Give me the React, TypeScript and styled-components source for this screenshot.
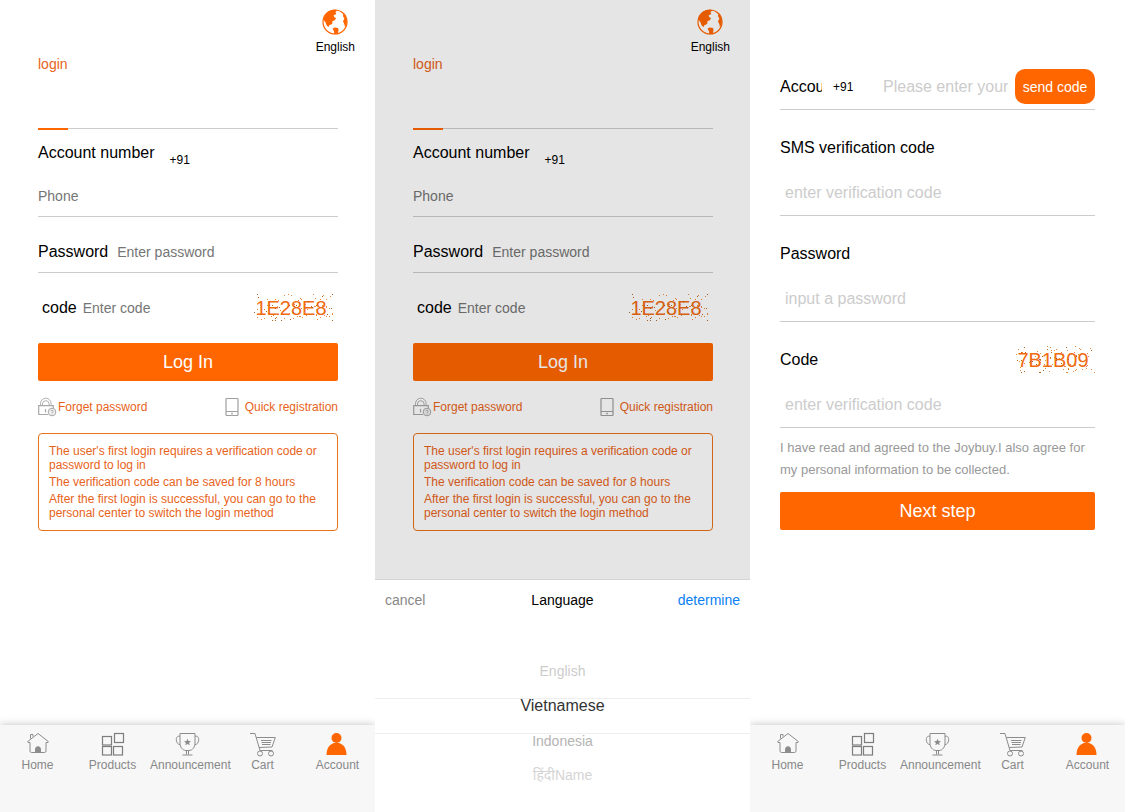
import React, { useId } from "react";
import styled, { createGlobalStyle, css } from "styled-components";

const ORANGE = "#ff6600";

const GlobalStyle = createGlobalStyle`
  *, *::before, *::after { box-sizing: border-box; }
  body {
    margin: 0;
    background: #fff;
    color: #000;
    font-family: "Liberation Sans", Arial, "Noto Sans", sans-serif;
    font-size: 14px;
  }
  button, input { font-family: inherit; }
  p, h2, ul { margin: 0; padding: 0; }
`;

const Page = styled.div`
  display: grid;
  grid-template-columns: repeat(3, minmax(0, 1fr));
  min-height: 100vh;
`;

const Phone = styled.section`
  position: relative;
  display: flex;
  flex-direction: column;
  overflow: hidden;
`;

const PlainButton = styled.button`
  border: 0;
  padding: 0;
  background: none;
  color: inherit;
  cursor: pointer;
`;

/* Login form */

const LoginBody = styled.main`
  padding: 0 37px 0 38px;
`;

const TopBar = styled.header`
  display: flex;
  justify-content: flex-end;
  height: 56px;
  padding: 9px 20px 0 0;
`;

const LanguageButton = styled(PlainButton)`
  display: flex;
  flex-direction: column;
  align-items: center;
  gap: 4px;
  font-size: 12px;
  line-height: 16px;
`;

const Tabs = styled.div`
  display: flex;
  height: 73px;
  border-bottom: 1px solid #ccc;
`;

const Tab = styled(PlainButton)`
  display: flex;
  height: 74px;
  border-bottom: 2px solid ${ORANGE};
  color: #e8631a;
  font-size: 14px;
  line-height: 16px;
`;

const FieldLabel = styled.label`
  flex: none;
  font-size: 16px;
  line-height: 20px;
`;

const LoginField = styled.div<{ $underline?: boolean; $inset?: boolean }>`
  display: flex;
  align-items: center;
  height: 56px;
  padding: ${(p) => (p.$inset ? "15px 5px 0 4px" : "14px 0 0")};
  gap: ${(p) => (p.$inset ? "6px" : "9px")};
  border-bottom: 1px solid ${(p) => (p.$underline ? "#ccc" : "transparent")};
`;

const AccountRow = styled.div`
  display: flex;
  gap: 15px;
  height: 44px;
  padding-top: 14px;
`;

const DialCode = styled(PlainButton)<{ $low?: boolean }>`
  flex: none;
  align-self: flex-start;
  font-size: 12px;
  line-height: 20px;
  margin-top: ${(p) => (p.$low ? "7px" : "0")};
`;

const PhoneRow = styled.div`
  display: flex;
  align-items: center;
  height: 44px;
  padding-top: 2px;
  border-bottom: 1px solid #ccc;
`;

const LoginInput = styled.input`
  flex: 1;
  width: 100%;
  min-width: 0;
  height: 24px;
  border: 0;
  padding: 0;
  outline: 0;
  background: transparent;
  font-size: 14px;
  &::placeholder { color: #757575; opacity: 1; }
`;

const CaptchaBox = styled.button`
  position: relative;
  flex: none;
  display: grid;
  place-items: center;
  width: 80px;
  height: 28px;
  border: 0;
  padding: 0 4px 0 0;
  background: none;
  color: #f06a12;
  font-size: 20px;
  line-height: 28px;
  cursor: pointer;
`;

const Noise = styled.svg`
  position: absolute;
  inset: 0;
`;

const MainButton = styled.button`
  display: block;
  width: 100%;
  height: 38px;
  border: 0;
  border-radius: 2px;
  padding: 0;
  background: ${ORANGE};
  color: #fff;
  font-size: 18px;
  line-height: 38px;
  cursor: pointer;
`;

const LoginAction = styled.div`
  padding-top: 14px;
`;

const HelpLinks = styled.div`
  display: flex;
  justify-content: space-between;
  align-items: center;
  height: 52px;
`;

const HelpLink = styled.a<{ $gap: number }>`
  display: flex;
  align-items: center;
  gap: ${(p) => p.$gap}px;
  color: #e8631a;
  font-size: 12px;
  text-decoration: none;
`;

const Notice = styled.div`
  display: flex;
  flex-direction: column;
  gap: 3px;
  padding: 10px;
  border: 1px solid #e8731a;
  border-radius: 4px;
  color: #e8631a;
  font-size: 12px;
  line-height: 14px;
`;

/* Tab bar */

const NavBar = styled.nav`
  display: grid;
  grid-template-columns: repeat(5, minmax(0, 1fr));
  height: 87px;
  margin-top: auto;
  padding-top: 6px;
  background: #f7f7f7;
  box-shadow: 0 0 8px rgba(0, 0, 0, 0.25);
`;

const NavItem = styled.a`
  display: flex;
  flex-direction: column;
  align-items: safe center;
  gap: 1px;
  height: 42px;
  color: #888;
  font-size: 12px;
  line-height: 14px;
  text-decoration: none;
  svg { height: 26px; }
`;

/* Language picker */

const Mask = styled.div`
  position: absolute;
  inset: 0;
  background: rgba(0, 0, 0, 0.1);
`;

const Sheet = styled.div`
  position: absolute;
  left: 0;
  right: 0;
  bottom: 0;
  height: 233px;
  border-top: 1px solid #d4d4d4;
  background: #fff;
`;

const SheetHeader = styled.div`
  display: grid;
  grid-template-columns: 1fr auto 1fr;
  align-items: center;
  height: 40px;
  padding: 0 10px;
`;

const SheetTitle = styled.h2`
  font-size: 14px;
  font-weight: 400;
`;

const SheetAction = styled(PlainButton)<{ $primary?: boolean }>`
  justify-self: ${(p) => (p.$primary ? "end" : "start")};
  color: ${(p) => (p.$primary ? "#0a7ff5" : "#888")};
  font-size: 14px;
`;

const Wheel = styled.ul`
  padding-top: 44px;
  list-style: none;
`;

const WheelRow = styled.li<{ $active?: boolean }>`
  display: flex;
  justify-content: center;
  align-items: flex-start;
  height: ${(p) => (p.$active ? "36px" : "34px")};
  ${(p) =>
    p.$active &&
    css`
      border: solid #eee;
      border-width: 1px 0;
    `}
`;

const WheelOption = styled(PlainButton)<{ $active?: boolean; $tone: string }>`
  color: ${(p) => p.$tone};
  font-size: ${(p) => (p.$active ? "16px" : "14px")};
  line-height: 14px;
`;

/* Registration form */

const RegisterBody = styled.main`
  padding: 64px 30px 0;
`;

const SendRow = styled.div`
  display: flex;
  align-items: center;
  height: 46px;
  border-bottom: 1px solid #ccc;
`;

const ClippedLabel = styled(FieldLabel)`
  width: 42px;
  margin-right: 11px;
  overflow: hidden;
  white-space: nowrap;
`;

const CodeSlot = styled.div`
  display: flex;
  flex: none;
  width: 50px;
`;

const RegisterInput = styled(LoginInput)`
  font-size: 16px;
  &::placeholder { color: #ccc; }
`;

const SendButton = styled.button`
  flex: none;
  width: 80px;
  height: 35px;
  margin-left: 7px;
  border: 0;
  border-radius: 10px;
  padding: 0;
  background: ${ORANGE};
  color: #fff;
  font-size: 14px;
  cursor: pointer;
`;

const StackedField = styled.div`
  display: flex;
  flex-direction: column;
  height: 106px;
  padding-top: 24px;
  border-bottom: 1px solid #ccc;
`;

const StackedHead = styled.div`
  display: flex;
  justify-content: space-between;
  align-items: center;
  height: 28px;
`;

const StackedInputSlot = styled.div`
  display: flex;
  flex: 1;
  align-items: center;
  padding: 9px 5px 0;
`;

const Terms = styled.p`
  padding: 9px 0 11px;
  color: #999;
  font-size: 13px;
  line-height: 22px;
`;

/* Icons */

const GlobeIcon = () => (
  <svg width="26" height="26" viewBox="0 0 26 26" aria-hidden="true">
    <circle cx="13" cy="13" r="12" fill="#fff" stroke={ORANGE} strokeWidth="1.2" />
    <path
      fill={ORANGE}
      d="M1.500 9C3 4 7.500 .8 13 .8l2.500.5-2 1.700.8 2-2.600 1.300.4 1.700 2 1.200-1.600 2.300-2 .6-.3 3-3 1.200-.2 1.800-2.200-1.300-1.600-4L1.500 11zM16 19l-3.500-.6-2 1.400 1.500 2.500.2 2.900 3.600-.3.700-3.800zM18 2.500l3.500 2.300-.6 2.200 1.500 2.500-1.400 3 1.300 2.500.7 3.500 1.700-4 .2-4L23 5z"
    />
  </svg>
);

const LockIcon = () => (
  <svg width="19" height="20" viewBox="0 0 19 20" fill="none" stroke="#a8a8a8" aria-hidden="true">
    <path d="M2.500 8.500V6.500a5.300 5.300 0 0 1 10.600 0V8.500M4.500 8.500V7a3.300 3.300 0 0 1 6.600 0v1.500" strokeWidth=".9" />
    <path d="M10 17.500H.7V8.700H15.300V11.500M7.500 12v3.500" strokeWidth="1.200" />
    <circle cx="14" cy="15" r="3.800" fill="#f2f2f2" />
    <path d="M12.800 14.300a1.200 1.200 0 1 1 1.200 1.300v.5M14 16.700v.7" strokeWidth=".9" />
  </svg>
);

const TabletIcon = () => (
  <svg width="14" height="20" viewBox="0 0 14 20" fill="none" stroke="#a0a0a0" aria-hidden="true">
    <rect x="1" y="1.500" width="12" height="17" rx=".5" strokeWidth="1.200" />
    <path d="M1 14.500h12" />
    <path d="M6.200 16.500h1.600" strokeWidth="1.400" />
  </svg>
);

const HomeIcon = () => (
  <svg width="24" height="26" viewBox="0 0 24 26" fill="none" stroke="#8c8c8c" strokeLinejoin="round" aria-hidden="true">
    <path d="M4.500 7.500V3.500h2.500V5.500M4 11.500H2L1.700 10.500 12 2.500 22.300 10.500 22 11.500H20V20q0 1.500-1.500 1.500h-13Q4 21.500 4 20z" />
    <path d="M9.500 21.500v-3.300a2.500 2.500 0 0 1 5 0v3.300z" fill="#8c8c8c" />
  </svg>
);

const ProductsIcon = () => (
  <svg width="24" height="26" viewBox="0 0 24 26" fill="none" stroke="#7d7d7d" strokeWidth="1.200" aria-hidden="true">
    <rect x="1.500" y="5.500" width="9" height="8.500" />
    <rect x="13.500" y="2.500" width="9" height="9" />
    <rect x="1.500" y="15.500" width="9" height="8.500" />
    <rect x="12.500" y="15.500" width="9" height="8.500" />
  </svg>
);

const TrophyIcon = () => (
  <svg width="75" height="26" viewBox="0 0 24 26" fill="none" stroke="#8c8c8c" aria-hidden="true">
    <path d="M4.500 2.500h15V12C19.500 16 17 19.500 13.500 19.500h-3C7 19.500 4.500 16 4.500 12zM4.500 5.500C2.500 4.500 .8 6 .8 8.500c0 3 1.500 4.800 3.900 5.300M19.500 5.500C21.500 4.500 23.200 6 23.200 8.500c0 3-1.500 4.800-3.900 5.300M11 19.500v4M13 19.500v4M7 24h10" />
    <path d="M12 7.800l1 2.300 2.400.2-1.800 1.600.6 2.400-2.200-1.300-2.200 1.300.6-2.400-1.800-1.600 2.400-.2z" fill="#8c8c8c" stroke="none" />
  </svg>
);

const CartIcon = () => (
  <svg width="26" height="26" viewBox="0 0 26 26" fill="none" stroke="#8c8c8c" strokeLinejoin="round" aria-hidden="true">
    <path d="M0 2.500H5L10 19.500H22.500M6.500 6.500H25.300L22 16 9 16.500M11 9.500h10.500M11.500 11.500h9.500M12 13.500h8.500" />
    <circle cx="10" cy="22.500" r="2.500" />
    <circle cx="21" cy="22.500" r="2.500" />
  </svg>
);

const PersonIcon = () => (
  <svg width="24" height="26" viewBox="0 0 24 26" fill={ORANGE} aria-hidden="true">
    <circle cx="10.500" cy="7" r="5" />
    <path d="M.5 24c0-6 2.500-10.500 7.500-12h5c5 1.500 7.500 6 7.500 12z" />
  </svg>
);

/* Speckles laid over the verification code, repeatable for each seed. */
const speckles = (seed: number) => {
  let s = seed;
  const next = (n: number) => {
    s = (s * 16807) % 2147483647;
    return s % n;
  };
  return Array.from({ length: 95 }, () => ({
    x: next(80),
    y: next(27),
    fill: next(3) === 0 ? "#b5651d" : "#ee8a3c",
  }));
};

const Captcha = ({ text, seed }: { text: string; seed: number }) => (
  <CaptchaBox type="button" title="Refresh code">
    {text}
    <Noise width="80" height="28" aria-hidden="true">
      {speckles(seed).map((d, i) => (
        <rect key={i} x={d.x} y={d.y} width="1" height="1" fill={d.fill} />
      ))}
    </Noise>
  </CaptchaBox>
);

const NAV = [
  { label: "Home", Icon: HomeIcon },
  { label: "Products", Icon: ProductsIcon },
  { label: "Announcement", Icon: TrophyIcon },
  { label: "Cart", Icon: CartIcon },
  { label: "Account", Icon: PersonIcon },
];

const BottomNav = () => (
  <NavBar>
    {NAV.map(({ label, Icon }) => (
      <NavItem href="#" key={label}>
        <Icon />
        {label}
      </NavItem>
    ))}
  </NavBar>
);

const LoginForm = () => {
  const id = useId();
  return (
    <>
      <TopBar>
        <LanguageButton type="button">
          <GlobeIcon />
          English
        </LanguageButton>
      </TopBar>
      <LoginBody>
        <Tabs>
          <Tab type="button">login</Tab>
        </Tabs>
        <AccountRow>
          <FieldLabel htmlFor={`${id}-phone`}>Account number</FieldLabel>
          <DialCode type="button" $low>+91</DialCode>
        </AccountRow>
        <PhoneRow>
          <LoginInput id={`${id}-phone`} type="tel" placeholder="Phone" />
        </PhoneRow>
        <LoginField $underline>
          <FieldLabel htmlFor={`${id}-pass`}>Password</FieldLabel>
          <LoginInput id={`${id}-pass`} type="password" placeholder="Enter password" />
        </LoginField>
        <LoginField $inset>
          <FieldLabel htmlFor={`${id}-code`}>code</FieldLabel>
          <LoginInput id={`${id}-code`} placeholder="Enter code" />
          <Captcha text="1E28E8" seed={4211} />
        </LoginField>
        <LoginAction>
          <MainButton type="button">Log In</MainButton>
        </LoginAction>
        <HelpLinks>
          <HelpLink href="#" $gap={1}>
            <LockIcon />
            Forget password
          </HelpLink>
          <HelpLink href="#" $gap={6}>
            <TabletIcon />
            Quick registration
          </HelpLink>
        </HelpLinks>
        <Notice>
          <p>The user's first login requires a verification code or password to log in</p>
          <p>The verification code can be saved for 8 hours</p>
          <p>After the first login is successful, you can go to the personal center to switch the login method</p>
        </Notice>
      </LoginBody>
    </>
  );
};

const LANGUAGES = [
  { name: "English", tone: "#ccc" },
  { name: "Vietnamese", tone: "#333", active: true },
  { name: "Indonesia", tone: "#b4b4b4" },
  { name: "हिंदीName", tone: "#d4d4d4" },
];

const LanguagePicker = () => (
  <Sheet role="dialog" aria-label="Language">
    <SheetHeader>
      <SheetAction type="button">cancel</SheetAction>
      <SheetTitle>Language</SheetTitle>
      <SheetAction type="button" $primary>determine</SheetAction>
    </SheetHeader>
    <Wheel>
      {LANGUAGES.map(({ name, tone, active }) => (
        <WheelRow key={name} $active={active}>
          <WheelOption type="button" $tone={tone} $active={active}>{name}</WheelOption>
        </WheelRow>
      ))}
    </Wheel>
  </Sheet>
);

const RegisterForm = () => {
  const id = useId();
  return (
    <RegisterBody>
      <SendRow>
        <ClippedLabel htmlFor={`${id}-phone`}>Account number</ClippedLabel>
        <CodeSlot>
          <DialCode type="button">+91</DialCode>
        </CodeSlot>
        <RegisterInput id={`${id}-phone`} type="tel" placeholder="Please enter your phone number" />
        <SendButton type="button">send code</SendButton>
      </SendRow>
      <StackedField>
        <StackedHead>
          <FieldLabel htmlFor={`${id}-sms`}>SMS verification code</FieldLabel>
        </StackedHead>
        <StackedInputSlot>
          <RegisterInput id={`${id}-sms`} placeholder="enter verification code" />
        </StackedInputSlot>
      </StackedField>
      <StackedField>
        <StackedHead>
          <FieldLabel htmlFor={`${id}-pass`}>Password</FieldLabel>
        </StackedHead>
        <StackedInputSlot>
          <RegisterInput id={`${id}-pass`} type="password" placeholder="input a password" />
        </StackedInputSlot>
      </StackedField>
      <StackedField>
        <StackedHead>
          <FieldLabel htmlFor={`${id}-code`}>Code</FieldLabel>
          <Captcha text="7B1B09" seed={9377} />
        </StackedHead>
        <StackedInputSlot>
          <RegisterInput id={`${id}-code`} placeholder="enter verification code" />
        </StackedInputSlot>
      </StackedField>
      <Terms>
        I have read and agreed to the Joybuy.I also agree for my personal information to be collected.
      </Terms>
      <MainButton type="button">Next step</MainButton>
    </RegisterBody>
  );
};

export default function App() {
  return (
    <>
      <GlobalStyle />
      <Page>
        <Phone>
          <LoginForm />
          <BottomNav />
        </Phone>
        <Phone>
          <LoginForm />
          <Mask />
          <LanguagePicker />
        </Phone>
        <Phone>
          <RegisterForm />
          <BottomNav />
        </Phone>
      </Page>
    </>
  );
}
